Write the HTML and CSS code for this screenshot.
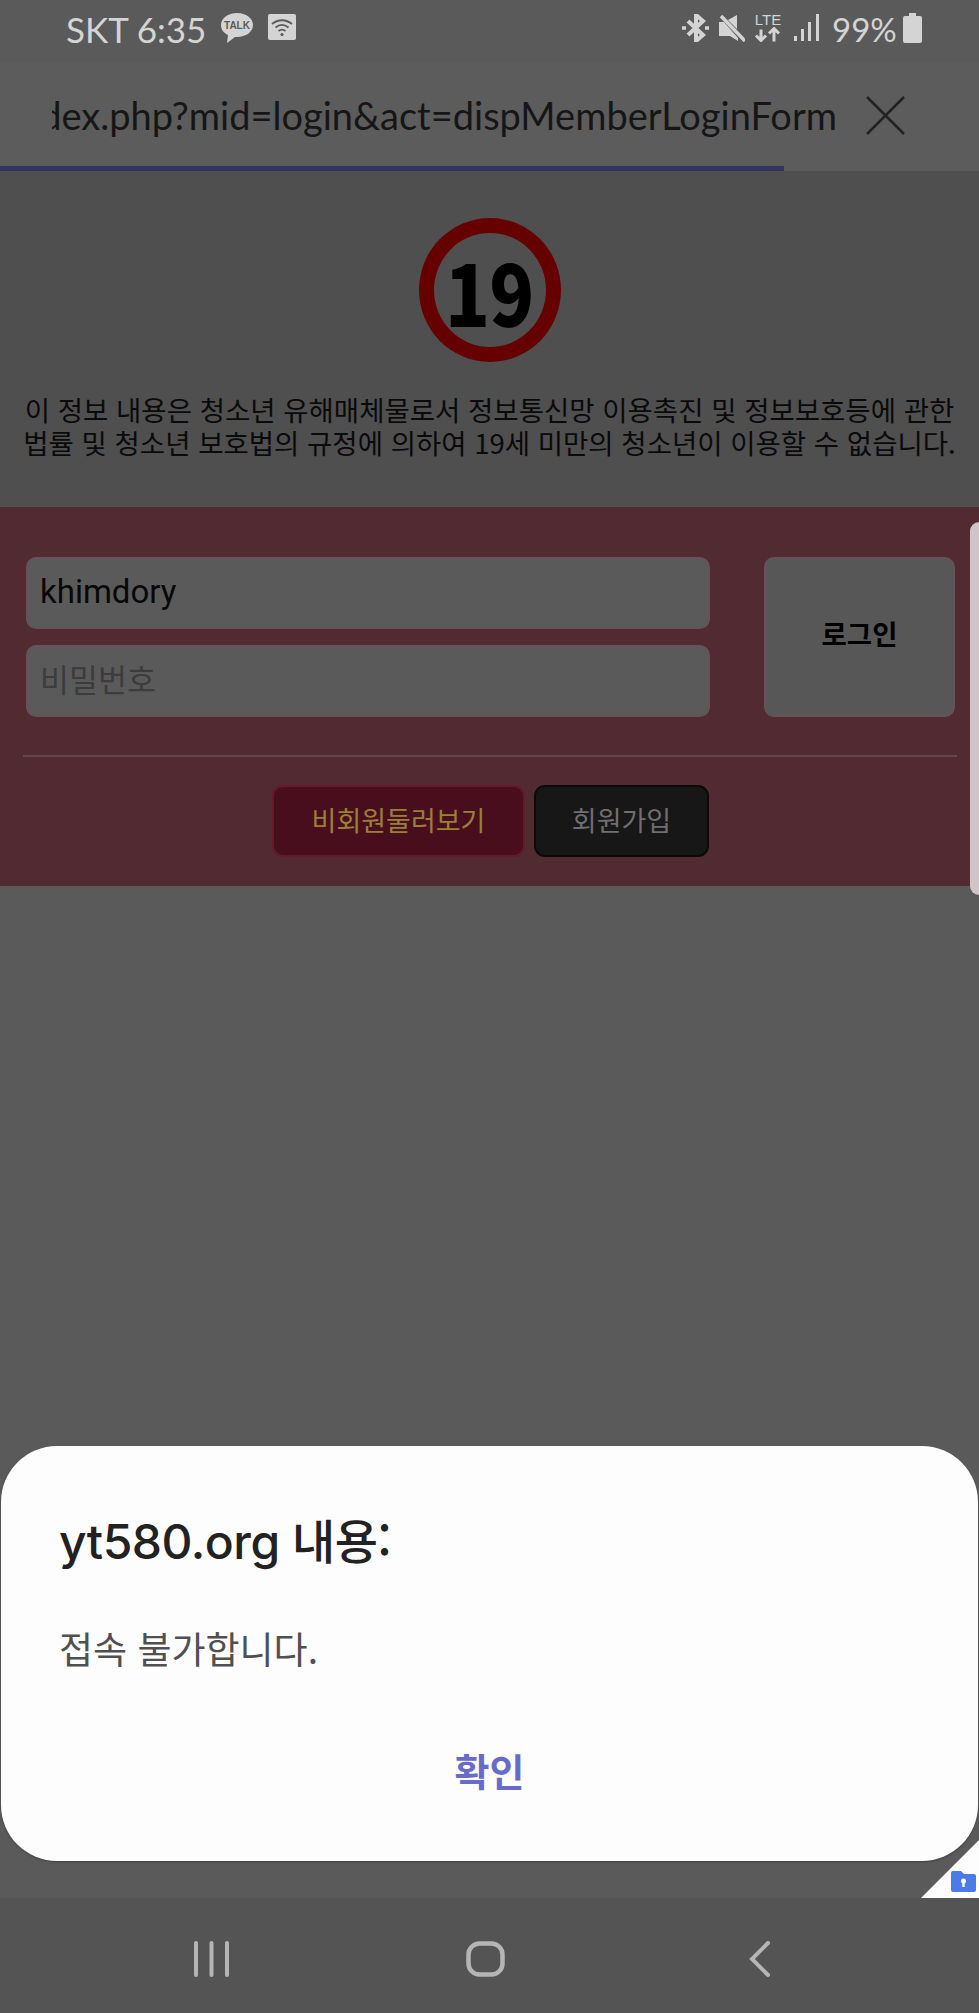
FILE: index.html
```html
<!DOCTYPE html>
<html lang="ko">
<head>
    <meta charset="UTF-8">
    <meta name="viewport" content="width=device-width, initial-scale=1.0">
    <title>yt580.org</title>
    <link rel="stylesheet" href="styles.css">
</head>
<body>
    <div class="screen">
        <div class="status-bar">
            <div class="status-left">
                <span class="status-text carrier">SKT 6:35</span>
                <svg class="icon-talk" viewBox="0 0 32 30">
                    <path d="M16 0C7 0 0 5 0 12c0 5 3 8 7 10l-1 8 8-6h2c9 0 16-5 16-12S25 0 16 0z" fill="#d4d4d4"/>
                    <text x="16" y="16" class="talk-label">TALK</text>
                </svg>
                <svg class="icon-wifi" viewBox="0 0 28 26">
                    <rect width="28" height="26" rx="2" fill="#d4d4d4"/>
                    <path d="M4 10c6-5 14-5 20 0M7.500 13.500c4-3.300 9-3.300 13 0M10.500 17c2-1.600 5-1.600 7 0" fill="none" stroke="#5a5a5a" stroke-width="1.800"/>
                    <circle cx="14" cy="20.500" r="1.600" fill="#5a5a5a"/>
                </svg>
            </div>
            <div class="status-right">
                <svg class="icon-bt" viewBox="0 0 27 28">
                    <path d="M6 7l15 14-7 6V1l7 6L6 21" fill="none" stroke="#d4d4d4" stroke-width="4"/>
                    <path d="M0 14h4M23 14h4" stroke="#d4d4d4" stroke-width="3.500"/>
                </svg>
                <svg class="icon-mute" viewBox="0 0 26 28">
                    <path d="M0 8h5l14 16v3l-8-5H0zM18 1v14L9 6z" fill="#d4d4d4"/>
                    <path d="M2 2l24 25" stroke="#d4d4d4" stroke-width="3.500"/>
                </svg>
                <div class="lte">
                    <span class="lte-label">LTE</span>
                    <span class="lte-arrows">
                        <svg viewBox="0 0 28 14">
                            <path d="M7 13V2M2 8l5 5 5-5M20 14V2M15 6l5-5 5 5" fill="none" stroke="#d4d4d4" stroke-width="3"/>
                        </svg>
                    </span>
                </div>
                <svg class="icon-signal" viewBox="0 0 25 27">
                    <rect x="0" y="22" width="3" height="5" fill="#d4d4d4"/>
                    <rect x="7" y="15" width="3" height="12" fill="#d4d4d4"/>
                    <rect x="14" y="8" width="3" height="19" fill="#d4d4d4"/>
                    <rect x="22" y="0" width="3" height="27" fill="#d4d4d4"/>
                </svg>
                <span class="status-text percent">99%</span>
                <svg class="icon-battery" viewBox="0 0 19 30">
                    <path d="M6 0h7v3h4a2 2 0 0 1 2 2v23a2 2 0 0 1-2 2H2a2 2 0 0 1-2-2V5a2 2 0 0 1 2-2h4z" fill="#d4d4d4"/>
                </svg>
            </div>
        </div>

        <div class="toolbar">
            <div class="url-box"><span class="url">index.php?mid=login&amp;act=dispMemberLoginForm</span></div>
            <svg class="icon-close" viewBox="0 0 39 39">
                <path d="M1 1l37 37M38 1L1 38" stroke="#222" stroke-width="2.500"/>
            </svg>
        </div>
        <div class="progress"><div class="progress-fill"></div></div>

        <div class="notice">
            <div class="age-mark"><span class="age-number">19</span></div>
            <p class="notice-text">이 정보 내용은 청소년 유해매체물로서 정보통신망 이용촉진 및 정보보호등에 관한<br>법률 및 청소년 보호법의 규정에 의하여 19세 미만의 청소년이 이용할 수 없습니다.</p>
        </div>

        <div class="login-panel">
            <div class="login-row">
                <div class="login-fields">
                    <div class="field">khimdory</div>
                    <div class="field placeholder">비밀번호</div>
                </div>
                <div class="login-button">로그인</div>
            </div>
            <div class="divider"></div>
            <div class="login-links">
                <div class="link-button guest">비회원둘러보기</div>
                <div class="link-button join">회원가입</div>
            </div>
        </div>

        <div class="page-rest"></div>

        <div class="nav-bar">
            <svg class="icon-recent" viewBox="0 0 35 36">
                <path d="M2 2v32M17.500 2v32M33 2v32" stroke="#b5b5b5" stroke-width="4" stroke-linecap="round"/>
            </svg>
            <svg class="icon-home" viewBox="0 0 39 36">
                <rect x="2.500" y="2.500" width="34" height="31" rx="11" fill="none" stroke="#b5b5b5" stroke-width="4.500"/>
            </svg>
            <svg class="icon-back" viewBox="0 0 21 36">
                <path d="M19 2L3 18l16 16" fill="none" stroke="#b5b5b5" stroke-width="4" stroke-linecap="round"/>
            </svg>
        </div>

        <div class="side-tab"></div>

        <div class="dialog">
            <h1 class="dialog-title">yt580.org <span class="title-ko">내용:</span></h1>
            <p class="dialog-message">접속 불가합니다.</p>
            <div class="dialog-action">확인</div>
        </div>

        <div class="corner-badge">
            <svg class="icon-folder" viewBox="0 0 25 21">
                <path d="M2 0h8l3 3h10a2 2 0 0 1 2 2v14a2 2 0 0 1-2 2H2a2 2 0 0 1-2-2V2a2 2 0 0 1 2-2z" fill="#4a7be8"/>
                <circle cx="12.500" cy="10" r="2.500" fill="#fff"/>
                <rect x="11.300" y="10" width="2.400" height="6" fill="#fff"/>
            </svg>
        </div>
    </div>
</body>
</html>
```

FILE: styles.css
```css
* {
    box-sizing: border-box;
}
body {
    margin: 0;
    background-color: #5a5a5a;
    font-family: "Noto Sans CJK KR", "Noto Sans", sans-serif;
}
.screen {
    position: relative;
    width: 979px;
    height: 2013px;
    overflow: hidden;
    display: flex;
    flex-direction: column;
}

/* status bar */
.status-bar {
    height: 62px;
    flex: none;
    display: flex;
    justify-content: space-between;
    background-color: #5a5a5a;
    padding: 13px 57px 0 66px;
}
.status-left, .status-right {
    display: flex;
    align-items: flex-start;
}
.status-text {
    font-family: Lato, sans-serif;
    font-size: 35px;
    line-height: 32px;
    color: #d4d4d4;
    white-space: nowrap;
}
.carrier {
    width: 155px;
}
.percent {
    width: 70px;
    margin: 0 0 0 13px;
    font-size: 33px;
}
.icon-talk {
    width: 32px;
    height: 30px;
}
.icon-wifi {
    width: 28px;
    height: 26px;
    margin: 1px 0 0 15px;
}
.talk-label {
    font-family: "Liberation Sans", sans-serif;
    font-size: 10px;
    font-weight: bold;
    text-anchor: middle;
    fill: #5a5a5a;
}
.icon-bt {
    width: 27px;
    height: 28px;
    margin-top: 1px;
}
.icon-mute {
    width: 26px;
    height: 28px;
    margin: 1px 0 0 10px;
}
.lte {
    width: 28px;
    margin: 0 0 0 9px;
    display: flex;
    flex-direction: column;
    align-items: center;
}
.lte-label {
    font-family: "Liberation Sans", sans-serif;
    font-size: 15px;
    line-height: 14px;
    color: #d4d4d4;
}
.lte-arrows svg {
    display: block;
    width: 28px;
    height: 15px;
}
.icon-signal {
    width: 25px;
    height: 27px;
    margin: 1px 0 0 12px;
}
.icon-battery {
    width: 19px;
    height: 30px;
    margin-left: 1px;
}

/* address toolbar */
.toolbar {
    height: 104px;
    flex: none;
    display: flex;
    align-items: center;
    background-color: #5c5c5c;
    padding: 2px 74px 0 52px;
}
.url-box {
    width: 785px;
    overflow: hidden;
    display: flex;
    justify-content: flex-end;
}
.url {
    font-family: Lato, sans-serif;
    font-size: 38px;
    line-height: 50px;
    color: #161616;
    white-space: nowrap;
}
.icon-close {
    width: 39px;
    height: 39px;
    margin-left: 29px;
}
.progress {
    height: 5px;
    flex: none;
    background-color: #5c5c5c;
}
.progress-fill {
    width: 784px;
    height: 100%;
    background-color: #33335f;
}

/* notice */
.notice {
    height: 336px;
    flex: none;
    background-color: #4f4f4f;
    padding-top: 47px;
    display: flex;
    flex-direction: column;
    align-items: center;
}
.age-mark {
    width: 142px;
    height: 144px;
    border: 15px solid #660000;
    border-radius: 50%;
    display: flex;
    align-items: center;
    justify-content: center;
    color: #000;
}
.age-number {
    font-size: 84px;
    font-weight: 900;
    letter-spacing: -1px;
    transform: scaleX(0.88);
}
.notice-text {
    margin: 31px 0 0;
    font-size: 27.500px;
    line-height: 33px;
    text-align: center;
    color: #0a0a0a;
    white-space: nowrap;
}

/* login */
.login-panel {
    height: 379px;
    flex: none;
    background-color: #512a32;
    padding: 50px 24px 0 26px;
}
.login-row {
    display: flex;
    justify-content: space-between;
}
.login-fields {
    width: 684px;
    display: flex;
    flex-direction: column;
    gap: 16px;
}
.field {
    height: 72px;
    padding: 0 0 3px 12px;
    display: flex;
    align-items: center;
    background-color: #5a5a5a;
    border: 2px solid #66525a;
    border-radius: 10px;
    font-family: Roboto, sans-serif;
    font-size: 33px;
    color: #080808;
}
.placeholder {
    font-family: "Noto Sans CJK KR", sans-serif;
    font-size: 31.500px;
    padding-bottom: 7px;
    color: #3c3c3c;
}
.login-button {
    width: 191px;
    height: 160px;
    padding-bottom: 8px;
    display: flex;
    align-items: center;
    justify-content: center;
    background-color: #575757;
    border: 2px solid #66525a;
    border-radius: 10px;
    font-size: 27.500px;
    font-weight: bold;
    color: #000;
}
.divider {
    height: 2px;
    margin: 38px 0 0 -3px;
    width: 934px;
    background-color: #644850;
}
.login-links {
    display: flex;
    margin: 28px 0 0 246px;
    gap: 9px;
}
.link-button {
    height: 72px;
    padding-bottom: 3px;
    display: flex;
    align-items: center;
    justify-content: center;
    border-radius: 11px;
    font-size: 27px;
}
.guest {
    width: 253px;
    background-color: #480e1e;
    border: 2px solid #631a2c;
    color: #9a8037;
}
.join {
    width: 175px;
    background-color: #171717;
    border: 2px solid #0a0a0a;
    color: #6f6f6f;
}
.page-rest {
    flex: 1;
    background-color: #5a5a5a;
}

/* navigation */
.nav-bar {
    height: 115px;
    flex: none;
    display: flex;
    align-items: flex-start;
    background-color: #545454;
    padding: 43px 0 0 194px;
}
.icon-recent {
    width: 35px;
    height: 36px;
}
.icon-home {
    width: 39px;
    height: 36px;
    margin-left: 237px;
}
.icon-back {
    width: 21px;
    height: 36px;
    margin-left: 244px;
}

/* things lying over the page */
.side-tab {
    position: absolute;
    top: 522px;
    right: 0;
    width: 9px;
    height: 373px;
    background-color: #d0c4c8;
    border-radius: 9px 0 0 9px;
}
.dialog {
    position: absolute;
    top: 1446px;
    left: 1px;
    width: 977px;
    height: 415px;
    background-color: #fdfdfd;
    border-radius: 56px;
    box-shadow: 0 1px 2px rgba(0, 0, 0, 0.3);
    padding: 61px 58px 0;
}
.dialog-title {
    margin: 0;
    font-family: Inter, "Noto Sans CJK KR", sans-serif;
    font-size: 48px;
    line-height: 64px;
    font-weight: 500;
    letter-spacing: -0.500px;
    color: #222;
}
.title-ko {
    font-family: "Noto Sans CJK KR", sans-serif;
    font-size: 47px;
    font-weight: 500;
}
.dialog-message {
    margin: 47px 0 0;
    font-size: 37px;
    line-height: 54px;
    color: #505050;
}
.dialog-action {
    margin-top: 66px;
    text-align: center;
    font-size: 38px;
    line-height: 58px;
    font-weight: bold;
    color: #686cc8;
}
.corner-badge {
    position: absolute;
    top: 1840px;
    right: 0;
    width: 58px;
    height: 58px;
    background-color: #fdfdfd;
    clip-path: polygon(100% 0, 100% 100%, 0 100%);
}
.icon-folder {
    position: absolute;
    right: 3px;
    bottom: 6px;
    width: 25px;
    height: 21px;
}
```
